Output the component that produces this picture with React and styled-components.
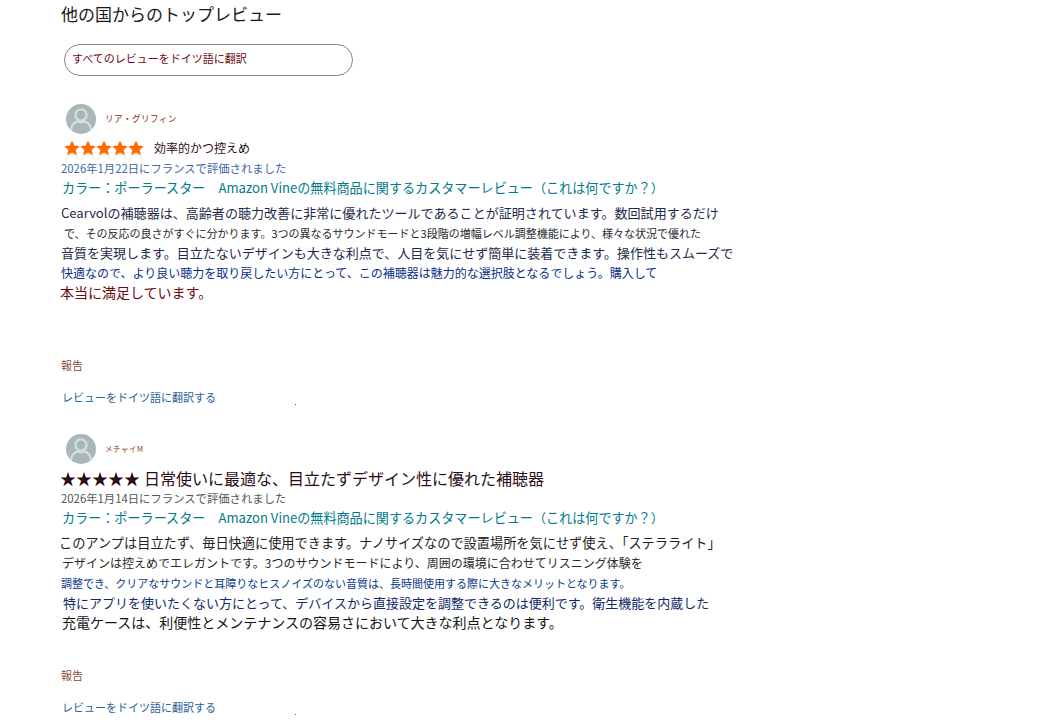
import React from "react";
import styled, { createGlobalStyle } from "styled-components";

const GlobalStyle = createGlobalStyle`
  html, body {
    margin: 0;
    background: #fff;
  }
  body {
    font-family: "Noto Sans CJK JP", "Noto Sans", sans-serif;
    height: 725px;
    overflow: hidden;
  }
`;

const Page = styled.div`
  display: flex;
  flex-direction: column;
  width: 1052px;
  padding-left: 61px;
  box-sizing: border-box;
`;

const Title = styled.h2`
  margin: 0;
  height: 28px;
  line-height: 28px;
  font-size: 17px;
  font-weight: 400;
  color: #1a1a1a;
`;

const TranslateAll = styled.button`
  display: block;
  width: 289px;
  height: 32px;
  margin: 16px 0 28px 3px;
  padding: 0 0 4px 7px;
  border: 1px solid #85808a;
  border-radius: 16px;
  background: #fff;
  text-align: left;
  font-family: inherit;
  font-size: 11px;
  color: #6a0a10;
`;

const Review = styled.section`
  display: flex;
  flex-direction: column;
  & + & {
    margin-top: 27px;
  }
`;

const Profile = styled.div`
  display: flex;
  align-items: center;
  gap: 9px;
  height: 30px;
  margin-left: 5px;
`;

const Avatar = styled.div`
  width: 30px;
  height: 30px;
  border-radius: 50%;
  overflow: hidden;
  background: #a9b7b9;
  svg {
    display: block;
  }
`;

const Name = styled.span`
  font-size: ${(p) => p.$size}px;
  line-height: ${(p) => p.$line}px;
  height: 30px;
  color: ${(p) => p.$color};
  letter-spacing: 0.4px;
`;

const RatingRow = styled.div`
  display: flex;
  align-items: center;
  height: 20px;
  margin-top: 4px;
  margin-left: ${(p) => p.$indent}px;
  font-size: ${(p) => p.$size}px;
  line-height: ${(p) => p.$line}px;
  color: #2a0f10;
  white-space: nowrap;
`;

const Stars = styled.div`
  display: flex;
  margin: 0 10px 0 3px;
`;

const Glyphs = styled.span`
  margin-right: 4px;
`;

const DateLine = styled.div`
  height: 20px;
  line-height: 20px;
  font-size: 11.35px;
  color: ${(p) => p.$color};
  white-space: nowrap;
`;

const Variant = styled.div`
  height: 20px;
  line-height: 20px;
  margin-left: 1px;
  font-size: 13.1px;
  color: #007a8a;
  white-space: pre;
`;

const Body = styled.div`
  margin-top: 5px;
  display: flex;
  flex-direction: column;
`;

const Line = styled.div`
  height: 20px;
  line-height: ${(p) => (p.$size < 12 ? 20 : 19)}px;
  margin-left: ${(p) => p.$indent}px;
  font-size: ${(p) => p.$size}px;
  color: ${(p) => p.$color};
  white-space: nowrap;
`;

const Report = styled.div`
  height: 20px;
  line-height: 18px;
  margin-top: ${(p) => p.$gap}px;
  font-size: 11px;
  color: #8a4a3a;
`;

const TranslateLink = styled.a`
  position: relative;
  display: block;
  height: 20px;
  line-height: 20px;
  margin: 11px 0 0 1px;
  font-size: 11px;
  color: #27609a;
  &::after {
    content: "";
    position: absolute;
    left: 233px;
    top: 17px;
    width: 1px;
    height: 1px;
    background: #27609a;
  }
`;

function StarIcon() {
  return (
    <svg width="16" height="16" viewBox="0 0 24 24">
      <path
        fill="#ff6a00"
        d="M12 .8l3.4 7.6 8.3.9-6.2 5.6 1.8 8.2L12 18.9l-7.3 4.2 1.8-8.2L.3 9.3l8.3-.9z"
      />
    </svg>
  );
}

function UserAvatar() {
  return (
    <Avatar>
      <svg width="30" height="30" viewBox="0 0 30 30" fill="none" stroke="#d5dedf" strokeWidth="2.2">
        <circle cx="15" cy="11" r="5.6" />
        <path d="M5 27c0-6 3.5-8.6 6.6-9.6 2 1 4.800 1 6.800 0C21.500 18.400 25 21 25 27" />
      </svg>
    </Avatar>
  );
}

const VARIANT_TEXT =
  "カラー\uFF1Aポーラースター\u3000Amazon Vineの無料商品に関するカスタマーレビュー\uFF08これは何ですか\uFF1F\uFF09";

function ReviewCard({ name, nameSize, nameLine, nameColor, children, date, dateColor, lines, reportGap }) {
  return (
    <Review>
      <Profile>
        <UserAvatar />
        <Name $size={nameSize} $line={nameLine} $color={nameColor}>{name}</Name>
      </Profile>
      {children}
      <DateLine $color={dateColor}>{date}</DateLine>
      <Variant>{VARIANT_TEXT}</Variant>
      <Body>
        {lines.map((l) => (
          <Line key={l.text} $size={l.size} $color={l.color} $indent={l.indent}>
            {l.text}
          </Line>
        ))}
      </Body>
      <Report $gap={reportGap}>報告</Report>
      <TranslateLink>レビューをドイツ語に翻訳する</TranslateLink>
    </Review>
  );
}

const firstLines = [
  { text: "Cearvolの補聴器は、高齢者の聴力改善に非常に優れたツールであることが証明されています。数回試用するだけ", size: 13.05, color: "#1e2a4a", indent: 0 },
  { text: "で、その反応の良さがすぐに分かります。3つの異なるサウンドモードと3段階の増幅レベル調整機能により、様々な状況で優れた", size: 11, color: "#2a2a30", indent: 3 },
  { text: "音質を実現します。目立たないデザインも大きな利点で、人目を気にせず簡単に装着できます。操作性もスムーズで", size: 13, color: "#1e2a4a", indent: 0 },
  { text: "快適なので、より良い聴力を取り戻したい方にとって、この補聴器は魅力的な選択肢となるでしょう。購入して", size: 12, color: "#0a2f8a", indent: 0 },
  { text: "本当に満足しています。", size: 14, color: "#6a0a0a", indent: -1 },
];

const secondLines = [
  { text: "このアンプは目立たず、毎日快適に使用できます。ナノサイズなので設置場所を気にせず使え、「ステラライト」", size: 13.2, color: "#222", indent: -2 },
  { text: "デザインは控えめでエレガントです。3つのサウンドモードにより、周囲の環境に合わせてリスニング体験を", size: 12, color: "#2a2a2a", indent: 1 },
  { text: "調整でき、クリアなサウンドと耳障りなヒスノイズのない音質は、長時間使用する際に大きなメリットとなります。", size: 11, color: "#0b3a8a", indent: 0 },
  { text: "特にアプリを使いたくない方にとって、デバイスから直接設定を調整できるのは便利です。衛生機能を内蔵した", size: 13, color: "#0f2a66", indent: 2 },
  { text: "充電ケースは、利便性とメンテナンスの容易さにおいて大きな利点となります。", size: 14, color: "#151515", indent: 1 },
];

export default function App() {
  return (
    <>
      <GlobalStyle />
      <Page>
        <Title>他の国からのトップレビュー</Title>
        <TranslateAll>すべてのレビューをドイツ語に翻訳</TranslateAll>
        <ReviewCard
          name="リア・グリフィン"
          nameSize={8.6}
          nameLine={28}
          nameColor="#8a2a20"
          date="2026年1月22日にフランスで評価されました"
          dateColor="#3f66a8"
          lines={firstLines}
          reportGap={53}
        >
          <RatingRow $indent={0} $size={12} $line={18}>
            <Stars>
              {[0, 1, 2, 3, 4].map((i) => (
                <StarIcon key={i} />
              ))}
            </Stars>
            効率的かつ控えめ
          </RatingRow>
        </ReviewCard>
        <ReviewCard
          name="メチャイM"
          nameSize={7.6}
          nameLine={30}
          nameColor="#9a3a14"
          date="2026年1月14日にフランスで評価されました"
          dateColor="#555"
          lines={secondLines}
          reportGap={33}
        >
          <RatingRow $indent={-1} $size={16} $line={16}>
            <Glyphs>★★★★★</Glyphs>
            日常使いに最適な、目立たずデザイン性に優れた補聴器
          </RatingRow>
        </ReviewCard>
      </Page>
    </>
  );
}
